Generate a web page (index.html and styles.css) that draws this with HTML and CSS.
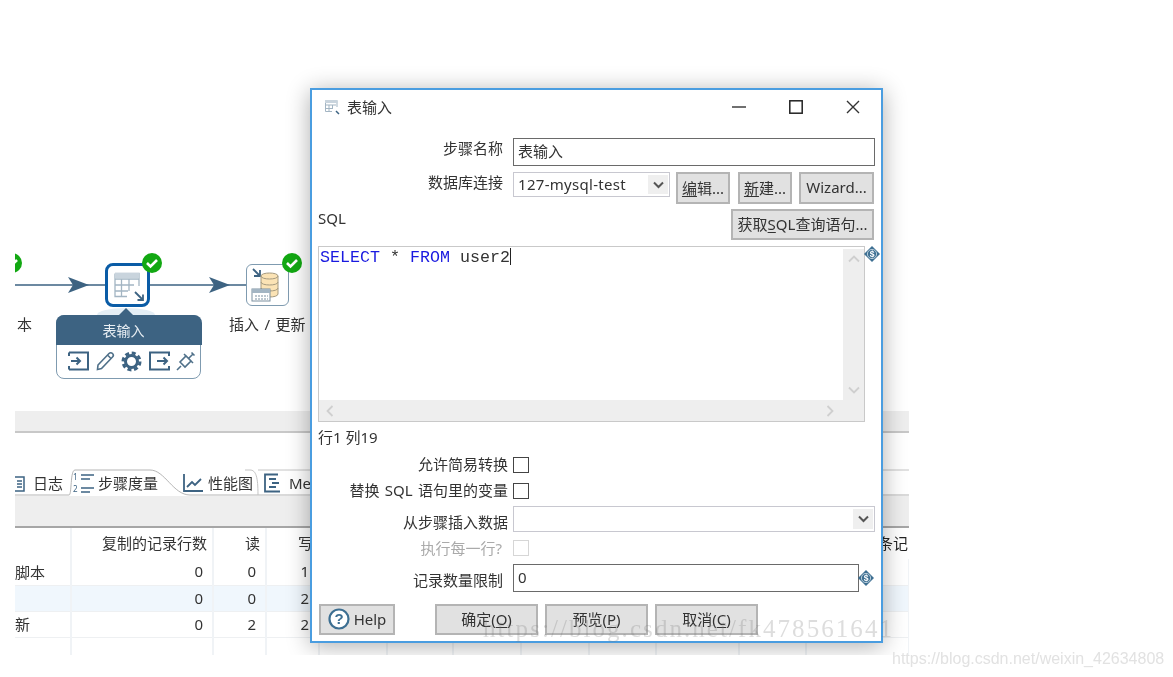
FILE: index.html
```html
<!DOCTYPE html>
<html lang="zh">
<head>
<meta charset="utf-8">
<title>表输入</title>
<link rel="stylesheet" href="styles.css">
</head>
<body>
<div class="stage">
  <div class="app">
    <div class="canvas">
      <svg class="hops" width="320" height="60" viewBox="0 0 320 60">
        <path d="M0 30H92M135 30H232" stroke="#3d6382" stroke-width="1.5" fill="none"/>
        <path d="M53 22L74 30L53 38L58 30Z M194 22L215 30L194 38L199 30Z" fill="#3d6382"/>
      </svg>
      <svg class="badge badge-clip" width="20" height="20" viewBox="0 0 20 20"><circle cx="10" cy="10" r="10" fill="#12a812"/><path d="M5 10l3.500 3.500L15 7" stroke="#fff" stroke-width="2.600" fill="none"/></svg>
      <div class="node node-sel">
        <svg width="38" height="37" viewBox="0 0 38 37">
          <path d="M7 7.500H31V20M19 30.500H7V7.500M7 13H31M7 19H26M7 25H20M13.500 13V30M21 13V25" stroke="#a3b5c3" stroke-width="1.300" fill="none"/>
          <path d="M7 7H31V12.500H7Z" fill="#c9d4dd"/>
          <path d="M27 26L35 34M35 28.500V34H29.500" stroke="#3d6382" stroke-width="1.800" fill="none"/>
        </svg>
      </div>
      <svg class="badge badge-a" width="20" height="20" viewBox="0 0 20 20"><circle cx="10" cy="10" r="10" fill="#12a812"/><path d="M5 10l3.500 3.500L15 7" stroke="#fff" stroke-width="2.600" fill="none"/></svg>
      <div class="node node-out">
        <svg width="41" height="40" viewBox="0 0 41 40">
          <path d="M6 4L13 11M13 5V11H7" stroke="#3d6382" stroke-width="1.800" fill="none"/>
          <path d="M14 11C14 7 31 7 31 11V29C31 33 14 33 14 29Z" fill="#fbe3b5" stroke="#a59a80"/>
          <path d="M14 11C14 15 31 15 31 11M14 17C14 21 31 21 31 17M14 23C14 27 31 27 31 23" stroke="#a59a80" fill="none"/>
          <rect x="5" y="24" width="18" height="12" fill="#fff" stroke="#7b8f9f"/>
          <path d="M5 24H23V28H5Z" fill="#a3b5c3"/>
          <path d="M8 31H21M8 34H21" stroke="#7b8f9f" stroke-dasharray="2 1" fill="none"/>
        </svg>
      </div>
      <svg class="badge badge-b" width="20" height="20" viewBox="0 0 20 20"><circle cx="10" cy="10" r="10" fill="#12a812"/><path d="M5 10l3.500 3.500L15 7" stroke="#fff" stroke-width="2.600" fill="none"/></svg>
      <span class="node-label label-a">本</span>
      <span class="node-label label-b">插入 / 更新</span>
      <div class="halo"></div>
      <div class="card">
        <div class="card-title">表输入</div>
        <div class="card-icons">
          <svg width="21" height="20" viewBox="0 0 21 20"><path d="M1 1.500H20V18.500H1M1 5V1.500M1 15V18.500" stroke="#3d6382" stroke-width="2" fill="none"/><path d="M3 10H12M8.500 6.500L12 10L8.500 13.500" stroke="#3d6382" stroke-width="2" fill="none"/></svg>
          <svg width="19" height="20" viewBox="0 0 19 20"><path d="M2 14L13 2.500C14 1.500 15.500 1.500 16.500 2.500C17.500 3.500 17.500 5 16.500 6L5.500 17.500L1.500 18.500ZM11.500 4L15 7.500" stroke="#4f7089" stroke-width="1.600" fill="none"/></svg>
          <svg width="21" height="21" viewBox="0 0 21 21"><circle cx="10.500" cy="10.500" r="6" stroke="#3d6382" stroke-width="3" fill="none"/><circle cx="10.500" cy="10.500" r="8.500" stroke="#3d6382" stroke-width="3" stroke-dasharray="4 2.670" fill="none"/></svg>
          <svg width="21" height="20" viewBox="0 0 21 20"><path d="M20 5V1.500H1V18.500H20V15" stroke="#3d6382" stroke-width="2" fill="none"/><path d="M8 10H18M14.500 6.500L18 10L14.500 13.500" stroke="#3d6382" stroke-width="2" fill="none"/></svg>
          <svg width="20" height="20" viewBox="0 0 20 20"><path d="M1 19L5 15M4 11L9 16L15 10L10 5ZM8 3L17 12M13 7L17 3M15.500 1.500L18.500 4.500" stroke="#4f7089" stroke-width="1.600" fill="none"/></svg>
        </div>
      </div>
    </div>
    <div class="gray-bar"></div>
    <div class="gap-band"></div>
    <div class="tabs">
      <svg class="tab-shape" width="894" height="27" viewBox="0 0 894 27">
        <path d="M0 26H54C57 26 55 1 60 1H135C150 1 158 26 175 26H894" stroke="#b5b5b5" fill="#fff"/>
        <path d="M230 1H235C241 1 243 8 243 26M243 1H894" stroke="#c4c4c4" fill="none"/>
      </svg>
      <span class="tab tab-log">
        <svg width="11" height="17" viewBox="0 0 11 17"><path d="M0 2H9V16H0M2 6H7M2 9H7M2 12H7" stroke="#3d6382" stroke-width="1.500" fill="none"/></svg>
        日志
      </span>
      <span class="tab tab-metrics">
        <svg width="24" height="22" viewBox="0 0 24 22"><path d="M8 3H21M8 7H17M8 16H21M8 20H17" stroke="#3d6382" stroke-width="1.500" fill="none"/><text x="0" y="8" class="mini">1</text><text x="0" y="20" class="mini">2</text></svg>
        步骤度量
      </span>
      <span class="tab tab-perf">
        <svg width="20" height="20" viewBox="0 0 20 20"><path d="M1 1V18H20" stroke="#3d6382" stroke-width="1.800" fill="none"/><path d="M4 14L9 9L12 12L18 6" stroke="#3d6382" stroke-width="1.800" fill="none"/></svg>
        性能图
      </span>
      <span class="tab tab-me">
        <svg width="18" height="20" viewBox="0 0 18 20"><path d="M14 1.500H1V18.500H16M5 6H12M8 10H15M5 14H12" stroke="#3d6382" stroke-width="1.800" fill="none"/></svg>
        Me
      </span>
    </div>
    <div class="toolbar"></div>
    <table class="metrics">
      <thead>
        <tr><th></th><th>复制的记录行数</th><th>读</th><th>写</th><th></th><th></th><th></th><th></th><th></th><th></th><th></th><th class="last">输入输出条记录</th></tr>
      </thead>
      <tbody>
        <tr><td class="name">脚本</td><td>0</td><td>0</td><td>1</td><td></td><td></td><td></td><td></td><td></td><td></td><td></td><td></td></tr>
        <tr class="hl"><td></td><td>0</td><td>0</td><td>2</td><td></td><td></td><td></td><td></td><td></td><td></td><td></td><td></td></tr>
        <tr><td class="name">新</td><td>0</td><td>2</td><td>2</td><td></td><td></td><td></td><td></td><td></td><td></td><td></td><td></td></tr>
        <tr><td></td><td></td><td></td><td></td><td></td><td></td><td></td><td></td><td></td><td></td><td></td><td></td></tr>
      </tbody>
    </table>

    <div class="dialog">
      <div class="titlebar">
        <svg class="title-icon" width="16" height="16" viewBox="0 0 16 16"><path d="M1.500 1.500H13V8M8 12.500H1.500V1.500M1.500 6H12M1.500 9.500H9M5 6V12M8.500 6V10" stroke="#a3b5c3" fill="none"/><path d="M1 1H13.500V4H1Z" fill="#c9d4dd"/><path d="M12 12L15 15" stroke="#3d6382" stroke-width="1.500"/></svg>
        <span class="title-text">表输入</span>
        <svg class="win-min" width="14" height="2" viewBox="0 0 14 2"><path d="M0 1H14" stroke="#333" stroke-width="1.400"/></svg>
        <svg class="win-max" width="14" height="14" viewBox="0 0 14 14"><rect x=".8" y=".8" width="12.400" height="12.400" stroke="#222" stroke-width="1.500" fill="none"/></svg>
        <svg class="win-close" width="14" height="14" viewBox="0 0 14 14"><path d="M1 1L13 13M13 1L1 13" stroke="#333" stroke-width="1.400"/></svg>
      </div>
      <div class="body">
        <div class="row row-name">
          <label class="lbl lbl-top">步骤名称</label>
          <div class="input input-name">表输入</div>
        </div>
        <div class="row row-db">
          <label class="lbl lbl-db">数据库连接</label>
          <div class="combo combo-db">127-mysql-test
            <span class="combo-btn"><svg width="11" height="8" viewBox="0 0 11 8"><path d="M1 1.500L5.500 6L10 1.500" stroke="#555" stroke-width="2" fill="none"/></svg></span>
          </div>
          <button class="btn btn-edit"><u>编</u>辑...</button>
          <button class="btn btn-new"><u>新</u>建...</button>
          <button class="btn btn-wiz">Wizard...</button>
        </div>
        <div class="row row-sql">
          <span class="sql-label">SQL</span>
          <button class="btn btn-fetch">获取<u>S</u>QL查询语句...</button>
        </div>
        <div class="editor">
          <div class="code"><span class="kw">SELECT</span> * <span class="kw">FROM</span> user2<span class="caret"></span></div>
          <div class="vscroll">
            <svg width="12" height="8" viewBox="0 0 12 8"><path d="M1 6.500L6 1.500L11 6.500" stroke="#cfcfcf" stroke-width="1.800" fill="none"/></svg>
            <svg width="12" height="8" viewBox="0 0 12 8"><path d="M1 1.500L6 6.500L11 1.500" stroke="#cfcfcf" stroke-width="1.800" fill="none"/></svg>
          </div>
          <div class="hscroll">
            <svg width="8" height="12" viewBox="0 0 8 12"><path d="M6.500 1L1.500 6L6.500 11" stroke="#cfcfcf" stroke-width="1.800" fill="none"/></svg>
            <svg width="8" height="12" viewBox="0 0 8 12"><path d="M1.500 1L6.500 6L1.500 11" stroke="#cfcfcf" stroke-width="1.800" fill="none"/></svg>
          </div>
          <svg class="var var-a" width="16" height="16" viewBox="0 0 16 16"><path d="M8 0L16 8L8 16L0 8Z" fill="#3d6f92"/><circle cx="8" cy="8" r="4.600" fill="#3d6f92" stroke="#d5e2ea" stroke-width=".8"/><text x="8" y="11" class="dollar">$</text></svg>
        </div>
        <div class="status">行1 列19</div>
        <div class="row row-c1">
          <label class="lbl lbl-r5">允许简易转换</label><span class="check"></span>
        </div>
        <div class="row row-c2">
          <label class="lbl lbl-r5 lbl-wide">替换 SQL 语句里的变量</label><span class="check"></span>
        </div>
        <div class="row row-from">
          <label class="lbl lbl-r5 lbl-low">从步骤插入数据</label>
          <div class="combo combo-from">
            <span class="combo-btn"><svg width="11" height="8" viewBox="0 0 11 8"><path d="M1 1.500L5.500 6L10 1.500" stroke="#555" stroke-width="2" fill="none"/></svg></span>
          </div>
        </div>
        <div class="row row-exec">
          <label class="lbl lbl-dis">执行每一行?</label><span class="check check-dis"></span>
        </div>
        <div class="row row-limit">
          <label class="lbl lbl-limit">记录数量限制</label>
          <div class="input input-limit">0</div>
          <svg class="var var-b" width="16" height="16" viewBox="0 0 16 16"><path d="M8 0L16 8L8 16L0 8Z" fill="#3d6f92"/><circle cx="8" cy="8" r="4.600" fill="#3d6f92" stroke="#d5e2ea" stroke-width=".8"/><text x="8" y="11" class="dollar">$</text></svg>
        </div>
        <div class="row row-actions">
          <button class="btn btn-help">
            <svg width="22" height="22" viewBox="0 0 22 22"><circle cx="11" cy="11" r="9.500" stroke="#3d6f92" stroke-width="2.200" fill="#fff"/><text x="11" y="16" class="qmark">?</text></svg>
            Help
          </button>
          <button class="btn btn-act btn-ok">确定(<u>O</u>)</button>
          <button class="btn btn-act">预览(<u>P</u>)</button>
          <button class="btn btn-act">取消(<u>C</u>)</button>
        </div>
      </div>
    </div>
  </div>
  <div class="mark-a">https://blog.csdn.net/fk478561641</div>
  <div class="mark-b">https://blog.csdn.net/weixin_42634808</div>
</div>
</body>
</html>
```

FILE: styles.css
```css
* { box-sizing: border-box; }
html, body { margin: 0; padding: 0; background: #fff; }
body { font-family: "Noto Sans", "Noto Sans CJK SC", sans-serif; font-size: 15px; color: #333; }
.stage { position: relative; width: 1173px; height: 677px; overflow: hidden; background: #fff; filter: blur(.35px); }
.app { position: absolute; left: 15px; top: 0; width: 894px; height: 655px; overflow: hidden; background: #fff; }

/* canvas */
.canvas { position: relative; height: 411px; }
.hops { position: absolute; left: 0; top: 255px; }
.node { position: absolute; background: #fff; }
.node-sel { left: 90px; top: 263px; width: 45px; height: 44px; border: 3.5px solid #0a5ca6; border-radius: 8px; }
.node-out { left: 231px; top: 264px; width: 43px; height: 42px; border: 1.5px solid #7f9bb0; border-radius: 6px; }
.node svg { display: block; }
.badge { position: absolute; }
.badge-clip { left: -13px; top: 253px; }
.badge-a { left: 127px; top: 253px; }
.badge-b { left: 267px; top: 253px; }
.node-label { position: absolute; top: 314px; line-height: 20px; font-size: 15px; white-space: nowrap; }
.label-a { left: 2px; }
.label-b { left: 214px; word-spacing: 1.5px; }
.halo { position: absolute; left: 82px; top: 308px; width: 58px; height: 14px; border-radius: 50% 50% 0 0; background: #e4eef5; }
.card { position: absolute; left: 41px; top: 315px; width: 145px; height: 64px; border: 1.5px solid #7f9bb0; border-radius: 8px; background: #fff; }
.card::before { content: ""; position: absolute; left: 61px; top: -8px; border: 8px solid transparent; border-top: 0; border-bottom-color: #3d6382; }
.card-title { height: 30px; margin: -1.5px -1.5px 0; border-radius: 8px 8px 0 0; background: #3d6382; color: #e8eef3; font-size: 14px; line-height: 32px; text-align: center; padding-right: 10px; }
.card-icons { display: flex; align-items: center; gap: 6.5px; padding: 6px 0 0 11px; }
.card-icons svg { display: block; flex: none; }

/* bars */
.gray-bar { height: 22px; background: #eee; border-bottom: 2px solid #c8c8c8; }
.gap-band { height: 36px; }
.tabs { position: relative; height: 27px; font-size: 15px; }
.tab-shape { position: absolute; left: 0; top: 0; }
.tab { position: absolute; top: 4px; display: flex; align-items: center; line-height: 20px; white-space: nowrap; }
.tab svg { flex: none; }
.tab-log { left: 0; gap: 7px; }
.tab-metrics { left: 58px; gap: 1px; top: 3px; }
.tab-perf { left: 168px; gap: 5px; }
.tab-me { left: 249px; gap: 7px; }
.mini { font-size: 8px; fill: #3d6382; }
.toolbar { height: 32px; background: #eee; border-bottom: 2px solid #a6a6a6; }

/* table */
.metrics { width: 894px; table-layout: fixed; border-collapse: collapse; font-size: 15px; }
.metrics th, .metrics td { padding: 0 9px 1px 0; text-align: right; font-weight: 400; white-space: nowrap; overflow: hidden; border-right: 2px solid #f0f3f6; }
.metrics th { height: 31px; padding: 0 5px 3px 0; }
.metrics td { height: 26px; border-bottom: 1px solid #eef0f2; }
.metrics th:nth-child(1) { width: 56px; }
.metrics th:nth-child(2) { width: 142px; }
.metrics th:nth-child(3) { width: 53px; }
.metrics th:nth-child(4) { width: 53px; }
.metrics th:nth-child(5) { width: 68px; }
.metrics th:nth-child(6) { width: 66px; }
.metrics th:nth-child(7) { width: 68px; }
.metrics th:nth-child(8) { width: 68px; }
.metrics th:nth-child(9) { width: 67px; }
.metrics th:nth-child(10) { width: 83px; }
.metrics th:nth-child(11) { width: 67px; }
.metrics th:nth-child(12) { width: 103px; }
.metrics th.last { text-align: left; padding-left: 11px; border-right: 0; color: #222; }
.metrics td.name { text-align: left; padding: 0 0 1px; }
.metrics .hl td { background: #f0f7fd; }

/* dialog */
.dialog { position: absolute; left: 295px; top: 88px; width: 573px; height: 555px; background: #fff; border: 2px solid #4a9de0; box-shadow: 0 3px 22px rgba(0,0,0,.32); }
.titlebar { display: flex; align-items: center; height: 34px; padding: 0 21px 0 12px; }
.title-icon { flex: none; }
.title-text { margin: -2px 0 0 7px; }
.win-min { margin-left: auto; }
.win-max { margin-left: 43px; }
.win-close { margin-left: 43px; }
.body { padding: 0 6px; }
.row { display: flex; align-items: flex-start; position: relative; }
.lbl { flex: none; width: 195px; text-align: right; line-height: 20px; white-space: nowrap; }
.lbl-top { padding-right: 10px; }
.row-name { margin-top: 14px; height: 28px; }
.input { border: 1.5px solid #6a6a6a; background: #fff; padding-left: 4px; }
.input-name { width: 362px; height: 28px; line-height: 25px; }
.row-db { margin-top: 6px; height: 32px; }
.lbl-db { padding-right: 10px; }
.combo { position: relative; background: #fff; border: 1.5px solid #c8c8d0; padding-left: 4px; line-height: 22px; }
.combo-db { width: 157px; height: 25px; letter-spacing: .3px; }
.combo-btn { position: absolute; right: 1px; top: 2px; bottom: 2px; width: 20px; background: #efefef; display: flex; align-items: center; justify-content: center; }
.btn { font: inherit; color: #333; background: #e1e1e1; border: 2px solid #b4b4b4; padding: 0 0 2px; height: 32px; white-space: nowrap; }
.btn u { text-underline-offset: 2px; }
.btn-edit { width: 54px; margin-left: 6px; }
.btn-new { width: 54px; margin-left: 8px; }
.btn-wiz { width: 75px; margin-left: 7px; }
.row-sql { margin-top: 5px; height: 31px; justify-content: space-between; padding-right: 1px; }
.sql-label { line-height: 20px; margin-top: -1px; }
.btn-fetch { width: 143px; height: 31px; }
.editor { position: relative; margin-top: 6px; width: 547px; height: 176px; border: 1.5px solid #c9c9c9; background: #fff; }
.code { padding: 1px 0 0 1px; font: 16.667px/18px "Liberation Mono", monospace; color: #333; white-space: pre; }
.kw { color: #1a1ae0; }
.caret { display: inline-block; width: 1px; height: 17px; background: #222; vertical-align: -3px; }
.vscroll { position: absolute; right: 0; top: 2px; bottom: 21px; width: 21px; background: #eee; display: flex; flex-direction: column; justify-content: space-between; align-items: center; padding: 6px 0; }
.hscroll { position: absolute; left: 0; right: 0; bottom: 0; height: 21px; background: #eee; display: flex; justify-content: space-between; align-items: center; padding: 0 30px 0 7px; }
.var { position: absolute; }
.var-a { right: -16px; top: -1px; }
.var-b { left: 540px; top: 6px; }
.dollar { font: 700 8.500px "Liberation Sans", sans-serif; fill: #fff; text-anchor: middle; }
.status { margin-top: 5px; height: 22px; line-height: 20px; }
.lbl-r5 { padding-right: 5px; }
.lbl-wide { word-spacing: 1.5px; }
.check { flex: none; width: 16px; height: 16px; border: 1.5px solid #444; background: #fff; }
.check-dis { border-color: #d6d6d6; }
.row-c1 { margin-top: 8px; height: 16px; }
.row-c2 { margin-top: 10px; height: 16px; }
.row-c1 .lbl, .row-c2 .lbl { line-height: 14px; }
.row-exec .lbl { line-height: 16px; }
.row-from { margin-top: 7px; height: 26px; }
.lbl-low { margin-top: 6px; }
.combo-from { width: 362px; height: 26px; }
.row-exec { margin-top: 8px; height: 16px; }
.lbl-dis { padding-right: 11px; color: #aaa; }
.row-limit { margin-top: 8px; height: 28px; }
.lbl-limit { padding-right: 10px; margin-top: 6px; }
.input-limit { width: 346px; height: 28px; line-height: 24px; }
.row-actions { margin-top: 12px; height: 31px; gap: 7px; padding-left: 1px; }
.btn-help { width: 76px; height: 31px; display: flex; align-items: center; justify-content: center; gap: 4px; }
.btn-help svg { flex: none; }
.qmark { font: 700 15px "Liberation Sans", sans-serif; fill: #3d6f92; text-anchor: middle; }
.btn-act { width: 103px; height: 31px; }
.btn-ok { margin-left: 33px; }

/* watermarks */
.mark-a { position: absolute; left: 483px; top: 614px; font: 25px/30px "Liberation Serif", serif; letter-spacing: 2.060px; color: rgba(120,120,120,.25); white-space: nowrap; }
.mark-b { position: absolute; left: 892px; top: 649px; font: 16px/20px "Liberation Sans", sans-serif; color: #e2e2e2; white-space: nowrap; }
```
